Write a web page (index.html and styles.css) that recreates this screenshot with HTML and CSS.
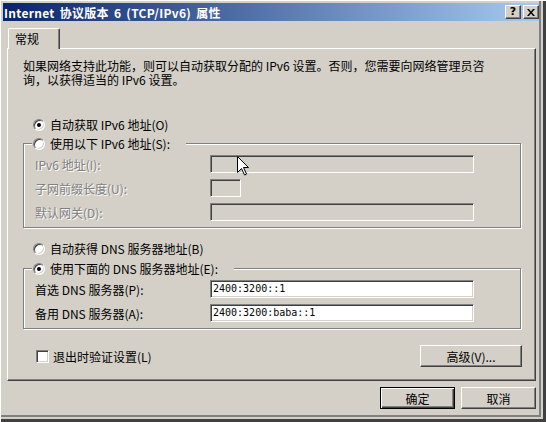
FILE: index.html
```html
<!DOCTYPE html>
<html lang="zh-CN">
<head>
<meta charset="UTF-8">
<title>Internet 协议版本 6 (TCP/IPv6) 属性</title>
<link rel="stylesheet" href="styles.css">
</head>
<body>
<div class="window">
    <div class="titlebar">
        <span class="title">Internet 协议版本 6 (TCP/IPv6) 属性</span>
        <div class="caption-buttons">
            <span class="cap-btn help">?</span>
            <span class="cap-btn close">
                <svg width="8" height="7" viewBox="0 0 8 7"><path d="M0 0h2l2 2.4L6 0h2L5 3.5 8 7H6L4 4.6 2 7H0l3-3.5z" fill="#000"/></svg>
            </span>
        </div>
    </div>

    <div class="tabs">
        <div class="tab">常规</div>
    </div>

    <div class="panel">
        <p class="desc">如果网络支持此功能，则可以自动获取分配的 IPv6 设置。否则，您需要向网络管理员咨<br>询，以获得适当的 IPv6 设置。</p>

        <div class="radio-row first"><span class="radio checked"></span>自动获取 IPv6 地址(O)</div>

        <div class="group">
            <div class="legend"><span class="radio"></span>使用以下 IPv6 地址(S):</div>
            <div class="field-row disabled"><span class="label">IPv6 地址(I):</span><span class="edit wide"></span></div>
            <div class="field-row disabled"><span class="label">子网前缀长度(U):</span><span class="edit short"></span></div>
            <div class="field-row disabled"><span class="label">默认网关(D):</span><span class="edit wide"></span></div>
        </div>

        <div class="radio-row dns-auto"><span class="radio"></span>自动获得 DNS 服务器地址(B)</div>

        <div class="group dns">
            <div class="legend"><span class="radio checked"></span>使用下面的 DNS 服务器地址(E):</div>
            <div class="field-row"><span class="label">首选 DNS 服务器(P):</span><span class="edit wide enabled">2400:3200::1</span></div>
            <div class="field-row"><span class="label">备用 DNS 服务器(A):</span><span class="edit wide enabled">2400:3200:baba::1</span></div>
        </div>

        <div class="options-row">
            <div class="check-row"><span class="checkbox"></span>退出时验证设置(L)</div>
            <span class="btn advanced">高级(V)...</span>
        </div>
    </div>

    <div class="dialog-buttons">
        <span class="btn default">确定</span>
        <span class="btn">取消</span>
    </div>

    <svg class="cursor" width="13" height="21" viewBox="0 0 13 21">
        <path d="M1.5 1.5V17.5L5.5 13.5L8.5 20L10.5 19L7.5 12.5H12.5Z" fill="#808080" opacity="0.35"/>
        <path d="M0.5 0.5V16.5L4.5 12.5L7.5 19L9.5 18L6.5 11.5H11.5Z" fill="#fff" stroke="#000" stroke-width="1"/>
    </svg>
</div>
</body>
</html>
```

FILE: styles.css
```css
html, body {
    margin: 0;
    padding: 0;
    background: #D4D0C8;
    font-family: "Noto Sans CJK SC", sans-serif;
    font-size: 12px;
    line-height: 13px;
    color: #000;
}

.window {
    position: relative;
    width: 546px;
    height: 422px;
    box-sizing: border-box;
    padding: 3px 7px 7px 3px;
    display: flex;
    flex-direction: column;
    background: #D4D0C8;
    box-shadow: inset 1px 1px 0 #fff,
        inset -3px -3px 0 #404040,
        inset -5px -5px 0 #D4D0C8,
        inset -7px -7px 0 #808080;
}

/* title bar */
.titlebar {
    height: 18px;
    display: flex;
    align-items: center;
    justify-content: space-between;
    background: linear-gradient(to right, #0A246A, #A6CAF0);
}
.title {
    color: #fff;
    font-weight: bold;
    padding-left: 1px;
    letter-spacing: 0.3px;
    word-spacing: 2px;
    white-space: nowrap;
}
.caption-buttons {
    display: flex;
    gap: 2px;
}
.cap-btn {
    width: 16px;
    height: 14px;
    box-sizing: border-box;
    display: flex;
    align-items: center;
    justify-content: center;
    background: #D4D0C8;
    border: 1px solid;
    border-color: #fff #404040 #404040 #fff;
    box-shadow: inset -1px -1px 0 #808080;
}
.cap-btn.help {
    font-family: "DejaVu Sans", sans-serif;
    font-weight: bold;
    font-size: 11px;
    line-height: 12px;
    padding-bottom: 1px;
}

/* tab */
.tabs {
    display: flex;
    margin: 7px 0 0 5px;
}
.tab {
    position: relative;
    z-index: 1;
    width: 52px;
    height: 21px;
    margin-bottom: -1px;
    box-sizing: border-box;
    padding: 3px 0 0 6px;
    background: #D4D0C8;
    border-top: 1px solid #fff;
    border-left: 1px solid #fff;
    border-right: 1px solid #404040;
    border-top-left-radius: 2px;
    border-top-right-radius: 2px;
    box-shadow: inset -1px 0 0 #808080;
}

.panel {
    width: 529px;
    height: 333px;
    margin-left: 4px;
    box-sizing: border-box;
    padding: 10px 13px 0 15px;
    border: 1px solid;
    border-color: #fff #404040 #404040 #fff;
    box-shadow: inset -1px -1px 0 #808080;
}

.desc {
    margin: 0;
    line-height: 14px;
}

/* radios and checks */
.radio-row, .legend, .check-row {
    display: flex;
    align-items: center;
    height: 13px;
    white-space: nowrap;
}
.radio-row {
    margin-left: 10px;
}
.radio-row.first {
    margin-top: 31px;
}
.radio-row.dns-auto {
    margin-top: 14px;
}
.radio {
    width: 12px;
    height: 12px;
    box-sizing: border-box;
    margin-right: 5px;
    border-radius: 50%;
    background: #fff;
    border: 1px solid;
    border-color: #808080 #fff #fff #808080;
    box-shadow: inset 1px 1px 0 #404040, inset -1px -1px 0 #D4D0C8;
    display: flex;
    align-items: center;
    justify-content: center;
}
.radio.checked::after {
    content: "";
    width: 4px;
    height: 4px;
    border-radius: 50%;
    background: #000;
}
.checkbox {
    width: 13px;
    height: 13px;
    box-sizing: border-box;
    margin-right: 4px;
    background: #fff;
    border: 1px solid;
    border-color: #808080 #fff #fff #808080;
    box-shadow: inset 1px 1px 0 #404040, inset -1px -1px 0 #D4D0C8;
}

/* etched group boxes */
.group {
    width: 498px;
    box-sizing: border-box;
    margin-top: 12px;
    padding: 0 0 6px 8px;
    border: 1px solid #808080;
    box-shadow: inset 1px 1px 0 #fff, 1px 1px 0 #fff;
}
.group.dns {
    margin-top: 13px;
}
.legend {
    align-self: flex-start;
    width: max-content;
    margin-top: -7px;
    padding: 0 16px 0 1px;
    background: #D4D0C8;
}
.field-row {
    display: flex;
    align-items: center;
    height: 18px;
    margin-top: 6px;
    padding-left: 3px;
}
.legend + .field-row {
    margin-top: 5px;
}
.label {
    width: 175px;
    white-space: nowrap;
}
.disabled .label {
    color: #808080;
    text-shadow: 1px 1px 0 #fff;
}
.edit {
    height: 18px;
    box-sizing: border-box;
    padding: 0 2px;
    background: #D4D0C8;
    border: 1px solid;
    border-color: #808080 #fff #fff #808080;
    box-shadow: inset 1px 1px 0 #404040, inset -1px -1px 0 #D4D0C8;
    font-family: "DejaVu Sans Mono", monospace;
    font-size: 10px;
    line-height: 16px;
    white-space: nowrap;
}
.edit.wide {
    width: 264px;
}
.edit.short {
    width: 31px;
}
.edit.enabled {
    background: #fff;
}

.options-row {
    display: flex;
    align-items: center;
    justify-content: space-between;
    margin-top: 16px;
}
.check-row {
    margin-left: 13px;
}

/* push buttons */
.btn {
    width: 75px;
    height: 22px;
    box-sizing: border-box;
    display: flex;
    align-items: center;
    justify-content: center;
    background: #D4D0C8;
    border: 1px solid;
    border-color: #fff #404040 #404040 #fff;
    box-shadow: inset -1px -1px 0 #808080;
    white-space: nowrap;
}
.btn.advanced {
    width: 102px;
}
.btn.default {
    border-color: #000;
    box-shadow: inset 1px 1px 0 #fff, inset -1px -1px 0 #404040, inset -2px -2px 0 #808080;
}
.dialog-buttons {
    display: flex;
    justify-content: flex-end;
    gap: 6px;
    margin: 6px 3px 0 0;
}

.cursor {
    position: absolute;
    left: 237px;
    top: 156px;
}
```
